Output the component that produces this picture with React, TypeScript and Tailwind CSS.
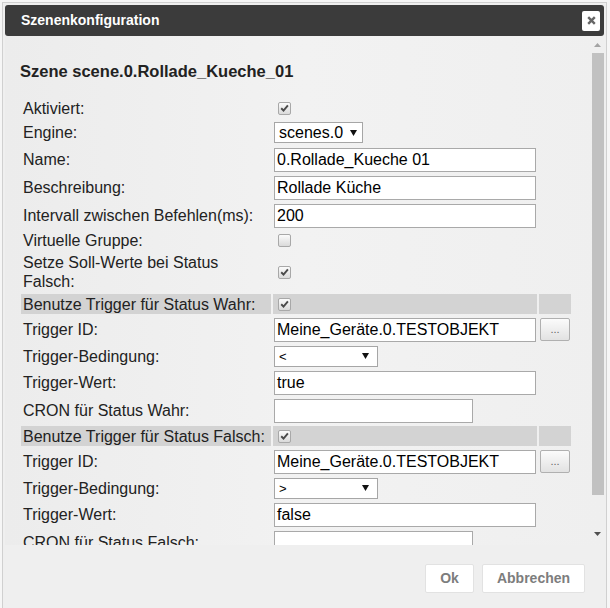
import type { ReactNode } from "react";

function Check({ checked }: { checked?: boolean }) {
  return (
    <span className="ml-[4px] flex h-[13px] w-[13px] items-center justify-center rounded-[2px] border border-[#a8a8a8] bg-gradient-to-b from-[#fbfbfb] to-[#dadada]">
      {checked && (
        <svg width="9" height="8" viewBox="0 0 9 8">
          <path d="M1.2 4.3 L3.5 6.5 L7.9 1.3" fill="none" stroke="#4a4a4a" strokeWidth="1.9" />
        </svg>
      )}
    </span>
  );
}

function Field({ value = "", wide = true }: { value?: string; wide?: boolean }) {
  return (
    <div
      className={`h-[24px] ${wide ? "w-[262px]" : "w-[199px]"} border border-[#a9a9a9] bg-white px-[2px] text-[16px] leading-[22px] text-black`}
    >
      {value}
    </div>
  );
}

function Select({ value, small }: { value: string; small?: boolean }) {
  return (
    <div
      className={`flex items-center justify-between border border-[#a6a6a6] bg-white text-black ${
        small ? "h-[21px] w-[104px] pl-[4px] pr-[8px] text-[13px]" : "h-[21px] w-[89px] pl-[4px] pr-[5px] text-[16px]"
      }`}
    >
      <span className="leading-none">{value}</span>
      <svg width="7" height="6" viewBox="0 0 7 6">
        <path d="M0 0 H7 L3.5 6 Z" fill="#111" />
      </svg>
    </div>
  );
}

function Row({
  label,
  h,
  hl,
  children,
  extra,
}: {
  label: ReactNode;
  h: string;
  hl?: boolean;
  children?: ReactNode;
  extra?: ReactNode;
}) {
  const bg = hl ? "bg-[#d3d3d3]" : "";
  return (
    <div className={`grid grid-cols-[250px_264px_32px] gap-x-[2px] ${h}`}>
      <div className={`flex items-center pl-[2px] text-[16px] leading-[19px] text-[#222] ${bg}`}>{label}</div>
      <div className={`flex items-center pl-[1px] ${bg}`}>{children}</div>
      <div className={`flex items-center pl-[1px] ${bg}`}>{extra}</div>
    </div>
  );
}

function Dots() {
  return (
    <div className="flex h-[23px] w-[30px] items-center justify-center rounded-[2px] border border-[#b0b0b0] bg-gradient-to-b from-[#fbfbfb] to-[#e2e2e2] text-[11px] leading-none text-[#666]">
      ...
    </div>
  );
}

export default function App() {
  return (
    <div className="h-[608px] w-[610px] overflow-hidden bg-[#f6f6f6] font-['Liberation_Sans',Arial,sans-serif]">
      <div className="ml-[2px] mt-[2px] h-[640px] w-[605px] border border-[#d0d0d0] bg-[#efefef] p-[2px]">
        {/* title bar */}
        <div className="flex h-[31px] items-center justify-between rounded-[3px] bg-[#3b3b3b] pl-[16px] pr-[4px]">
          <span className="text-[14px] font-bold text-white">Szenenkonfiguration</span>
          <div className="flex h-[20px] w-[18px] items-center justify-center rounded-[2px] bg-white">
            <svg width="9" height="9" viewBox="0 0 9 9">
              <path d="M1.2 1.2 L7.8 7.8 M7.8 1.2 L1.2 7.8" stroke="#666" strokeWidth="2.4" />
            </svg>
          </div>
        </div>

        {/* body */}
        <div className="flex h-[509px] bg-gradient-to-r from-[#ececec] via-[#f2f2f2] to-[#efefef]">
          <div className="flex-1 overflow-hidden">
            <h2 className="ml-[15px] mt-[26px] text-[16.5px] font-bold leading-[18px] text-[#222]">
              Szene scene.0.Rollade_Kueche_01
            </h2>
            <div className="ml-[16px] mt-[18px] flex flex-col gap-[3px]">
              <Row label="Aktiviert:" h="h-[20px]">
                <Check checked />
              </Row>
              <Row label="Engine:" h="h-[23px]">
                <Select value="scenes.0" />
              </Row>
              <Row label="Name:" h="h-[25px]">
                <Field value="0.Rollade_Kueche 01" />
              </Row>
              <Row label="Beschreibung:" h="h-[25px]">
                <Field value="Rollade Küche" />
              </Row>
              <Row label="Intervall zwischen Befehlen(ms):" h="h-[25px]">
                <Field value="200" />
              </Row>
              <Row label="Virtuelle Gruppe:" h="h-[19px]">
                <Check />
              </Row>
              <Row
                label={
                  <span>
                    Setze Soll-Werte bei Status
                    <br />
                    Falsch:
                  </span>
                }
                h="h-[38px]"
              >
                <Check checked />
              </Row>
              <Row label="Benutze Trigger für Status Wahr:" h="h-[20px]" hl>
                <Check checked />
              </Row>
              <Row label="Trigger ID:" h="h-[25px]" extra={<Dots />}>
                <Field value="Meine_Geräte.0.TESTOBJEKT" />
              </Row>
              <Row label="Trigger-Bedingung:" h="h-[22px]">
                <Select value="<" small />
              </Row>
              <Row label="Trigger-Wert:" h="h-[25px]">
                <Field value="true" />
              </Row>
              <Row label="CRON für Status Wahr:" h="h-[25px]">
                <Field wide={false} />
              </Row>
              <Row label="Benutze Trigger für Status Falsch:" h="h-[20px]" hl>
                <Check checked />
              </Row>
              <Row label="Trigger ID:" h="h-[25px]" extra={<Dots />}>
                <Field value="Meine_Geräte.0.TESTOBJEKT" />
              </Row>
              <Row label="Trigger-Bedingung:" h="h-[22px]">
                <Select value=">" small />
              </Row>
              <Row label="Trigger-Wert:" h="h-[25px]">
                <Field value="false" />
              </Row>
              <Row label="CRON für Status Falsch:" h="h-[25px]">
                <Field wide={false} />
              </Row>
            </div>
          </div>

          {/* scrollbar */}
          <div className="flex w-[13px] flex-col items-center">
            <svg className="mt-[7px]" width="7" height="4" viewBox="0 0 7 4">
              <path d="M0 4 L3.5 0 L7 4 Z" fill="#a3a3a3" />
            </svg>
            <div className="mt-[6px] h-[442px] w-[12px] bg-[#c1c1c1]" />
            <svg className="mt-[37px]" width="7" height="4" viewBox="0 0 7 4">
              <path d="M0 0 H7 L3.5 4 Z" fill="#505050" />
            </svg>
          </div>
        </div>

        {/* footer */}
        <div className="flex justify-end gap-[8px] pr-[19px] pt-[19px]">
          <button className="h-[29px] w-[49px] rounded-[2px] border border-[#e2e2e2] bg-white text-[14px] font-bold text-[#7d7d7d]">
            Ok
          </button>
          <button className="h-[29px] w-[103px] rounded-[2px] border border-[#e2e2e2] bg-white text-[14px] font-bold text-[#7d7d7d]">
            Abbrechen
          </button>
        </div>
      </div>
    </div>
  );
}
